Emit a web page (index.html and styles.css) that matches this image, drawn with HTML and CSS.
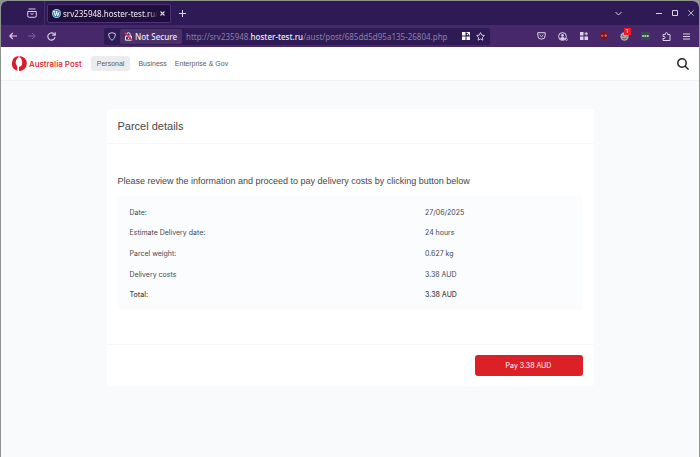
FILE: index.html
```html
<!DOCTYPE html>
<html lang="en">
  <head>
    <meta charset="UTF-8" />
    <meta name="viewport" content="width=device-width, initial-scale=1.0" />
    <title>Browser window - parcel details</title>
    <link rel="stylesheet" href="styles.css">
  </head>
  <body>
    <div class="window">
      <!-- Tab strip -->
      <div class="tab-bar">
        <button type="button" class="icon-btn tab-view" aria-label="Recent browsing">
          <svg width="10" height="10" viewBox="0 0 10 10" fill="none" stroke="currentColor">
            <path d="M1.5 1h7M.7 3.5h8.6v4.3q0 1.5-1.5 1.5H2.2q-1.5 0-1.5-1.5zM3.5 5.5q1.5 1.5 3 0" />
          </svg>
        </button>
        <div class="tab">
          <svg class="favicon" width="9" height="9" viewBox="0 0 10 10">
            <circle cx="5" cy="5" r="5" fill="#a9d5e8" />
            <circle cx="5" cy="5" r="4.2" fill="#3585ab" />
            <path d="M1.3 2.8h2M4.2 2.8H6M2.2 3l1.5 4.7L5.1 4M4.8 3l1.6 4.7L8 3.2" fill="none" stroke="#fff" stroke-width="1" />
          </svg>
          <span class="tab-title">srv235948.hoster-test.ru/</span>
          <button type="button" class="icon-btn tab-close" aria-label="Close tab">
            <svg width="5" height="5" viewBox="0 0 5 5" stroke="currentColor" stroke-width="1.1"><path d="M.5.5l4 4M4.5.5l-4 4" /></svg>
          </button>
        </div>
        <button type="button" class="icon-btn new-tab" aria-label="New tab">
          <svg width="7" height="7" viewBox="0 0 7 7" stroke="currentColor"><path d="M3.5 0v7M0 3.5h7" /></svg>
        </button>
        <div class="window-controls">
          <button type="button" class="icon-btn list-tabs" aria-label="List all tabs">
            <svg width="7" height="5" viewBox="0 0 7 5" fill="none" stroke="currentColor"><path d="M.5 1l3 3 3-3" /></svg>
          </button>
          <button type="button" class="icon-btn" aria-label="Minimize">
            <svg width="6" height="6" viewBox="0 0 6 6" stroke="currentColor"><path d="M0 3.5h6" /></svg>
          </button>
          <button type="button" class="icon-btn" aria-label="Maximize">
            <svg width="6" height="6" viewBox="0 0 6 6" fill="none" stroke="currentColor"><path d="M.5.5h5v5h-5z" /></svg>
          </button>
          <button type="button" class="icon-btn" aria-label="Close window">
            <svg width="6" height="6" viewBox="0 0 6 6" stroke="currentColor" stroke-width=".8"><path d="M.3.3l5.4 5.4M5.7.3L.3 5.7" /></svg>
          </button>
        </div>
      </div>

      <!-- Toolbar -->
      <div class="toolbar">
        <div class="nav-buttons">
          <button type="button" class="icon-btn" aria-label="Back">
            <svg width="8" height="8" viewBox="0 0 8 8" fill="none" stroke="currentColor" stroke-width="1.1"><path d="M8 4H.8M3.8 1l-3 3 3 3" /></svg>
          </button>
          <button type="button" class="icon-btn faded" aria-label="Forward">
            <svg width="8" height="8" viewBox="0 0 8 8" fill="none" stroke="currentColor"><path d="M0 4h7.2M4.2 1l3 3-3 3" /></svg>
          </button>
          <button type="button" class="icon-btn" aria-label="Reload">
            <svg width="9" height="9" viewBox="0 0 9 9" fill="none" stroke="currentColor" stroke-width="1.1"><path d="M8 5a3.6 3.6 0 1 1-1.2-3.2L8 3M8.2.3V3.3H5.2" /></svg>
          </button>
        </div>
        <div class="address-bar">
          <svg class="shield" width="8" height="9" viewBox="0 0 8 9" fill="none" stroke="currentColor"><path d="M4 .6l3.4 1.2q.2 4.7-3.4 6.6Q.4 6.5.6 1.8z" /></svg>
          <div class="security">
            <svg width="9" height="9" viewBox="0 0 9 9" fill="none" stroke="currentColor">
              <path d="M1.5 4.2h6v4h-6zM2.8 4V2.5q0-1.8 1.7-1.8t1.7 1.8V4M4.5 5.5v1.5" />
              <path d="M.5.5l8 8" stroke="#e2255c" stroke-width="1.2" />
            </svg>
            <span>Not Secure</span>
          </div>
          <div class="url">http://srv235948.<b>hoster-test.ru</b>/aust/post/685dd5d95a135-26804.php</div>
          <button type="button" class="icon-btn bright" aria-label="Page actions">
            <svg width="8" height="8" viewBox="0 0 8 8" fill="currentColor"><path d="M0 0h3.5v3.5H0zM0 4.5h3.5V8H0zM4.5 4.5H8V8H4.5zM4.5 0H8v3.5H7V1.7L5.2 3.5l-.7-.7L6.3 1H4.5z" /></svg>
          </button>
          <button type="button" class="icon-btn" aria-label="Bookmark this page">
            <svg width="9" height="9" viewBox="0 0 9 9" fill="none" stroke="currentColor" stroke-width=".9" stroke-linejoin="round"><path d="M4.5.6l1.2 2.5 2.7.4-2 1.9.5 2.8-2.4-1.3-2.4 1.3.5-2.8-2-1.9 2.7-.4z" /></svg>
          </button>
        </div>
        <div class="extensions">
          <button type="button" class="icon-btn" aria-label="Save to Pocket">
            <svg width="9" height="8" viewBox="0 0 9 8" fill="none" stroke="currentColor"><path d="M.8.7h7.4V3.5a3.7 3.7 0 0 1-7.4 0zM2.6 2.9l1.9 1.8 1.9-1.8" /></svg>
          </button>
          <button type="button" class="icon-btn" aria-label="Account">
            <svg width="10" height="9" viewBox="0 0 10 9" fill="none" stroke="currentColor">
              <circle cx="4.5" cy="4.5" r="3.9" />
              <circle cx="4.5" cy="3.4" r="1.3" fill="currentColor" stroke="none" />
              <path d="M2 7q.4-2 2.5-2T7 7q-2.5 2-5 0z" fill="currentColor" stroke="none" />
              <circle cx="8.5" cy="7.5" r="1" stroke-width=".7" />
            </svg>
          </button>
          <button type="button" class="icon-btn" aria-label="Containers">
            <svg width="8" height="8" viewBox="0 0 8 8" fill="currentColor"><path d="M0 0h3.5v3.5H0zM0 4.5h3.5V8H0zM4.5 4.5H8V8H4.5zM5.7 0h1v1.3H8v1H6.7v1.2h-1V2.3H4.5v-1h1.2z" /></svg>
          </button>
          <button type="button" class="icon-btn" aria-label="Ad blocker">
            <svg width="8" height="8" viewBox="0 0 8 8"><path d="M4 0l4 1q.4 5-4 7Q-.4 6 0 1z" fill="#870f19" /><path d="M1.6 2.8v1q0 .7.6.7t.6-.7v-1M5 2.9h1.3v1.3H5z" fill="none" stroke="#e8b4b8" stroke-width=".6" /></svg>
          </button>
          <button type="button" class="icon-btn badged" aria-label="Privacy extension, 1 item">
            <svg width="9" height="9" viewBox="0 0 9 9"><circle cx="4.5" cy="4.5" r="4.2" fill="#a9aba4" /><path d="M2 3.5l1.5 1M6.5 4.5l1-.5M2.5 6.5q2 1 4-.5" fill="none" stroke="#56595a" /></svg>
            <span class="badge">1</span>
          </button>
          <button type="button" class="icon-btn" aria-label="Password manager">
            <svg width="9" height="8" viewBox="0 0 9 8"><path d="M0 0h9v8H0z" fill="#37474b" /><path d="M1.2 4h1.6M3.5 4h1.6M5.8 4h1.9" stroke="#eef" stroke-width="1.3" /></svg>
          </button>
          <button type="button" class="icon-btn" aria-label="Extensions">
            <svg width="9" height="9" viewBox="0 0 9 9" fill="none" stroke="currentColor"><path d="M1 8.5V6.5h1q1-.1 1-1T2 4.5H1V2.6h2.3V1.8q.1-1.2 1.2-1.2t1.2 1.2v.8H8v5.9z" stroke-linejoin="round" /></svg>
          </button>
          <button type="button" class="icon-btn" aria-label="Open menu">
            <svg width="7" height="7" viewBox="0 0 7 7" stroke="currentColor"><path d="M0 1h7M0 3.5h7M0 6h7" /></svg>
          </button>
        </div>
      </div>

      <!-- Page -->
      <header class="site-header">
        <a href="#" class="brand">
          <svg width="15" height="15" viewBox="0 0 30 30">
            <path d="M13 .1A15 15 0 0 0 10.500 29.300V20C6 16 6 8 13 2.500z" fill="#dc1928" />
            <path d="M15 0a15 15 0 0 1-1 30v-8.500c4 0 6.500-3 6.500-8S18.500 3.500 15 2.500z" fill="#dc1928" />
          </svg>
          <span>Australia Post</span>
        </a>
        <nav class="site-nav">
          <a href="#" class="active">Personal</a>
          <a href="#">Business</a>
          <a href="#">Enterprise &amp; Gov</a>
        </nav>
        <button type="button" class="icon-btn search" aria-label="Search">
          <svg width="12" height="12" viewBox="0 0 12 12" fill="none" stroke="currentColor" stroke-width="1.5"><circle cx="5" cy="5" r="4.2" /><path d="M8 8l3.6 3.6" /></svg>
        </button>
      </header>

      <main class="page">
        <section class="card">
          <h1>Parcel details</h1>
          <div class="card-body">
            <p>Please review the information and proceed to pay delivery costs by clicking button below</p>
            <div class="details">
              <table>
                <tr><th scope="row">Date:</th><td>27/06/2025</td></tr>
                <tr><th scope="row">Estimate Delivery date:</th><td>24 hours</td></tr>
                <tr><th scope="row">Parcel weight:</th><td>0.627 kg</td></tr>
                <tr><th scope="row">Delivery costs</th><td>3.38 AUD</td></tr>
                <tr class="total"><th scope="row">Total:</th><td>3.38 AUD</td></tr>
              </table>
            </div>
          </div>
          <div class="card-footer">
            <button type="button" class="pay-button">Pay 3.38 AUD</button>
          </div>
        </section>
      </main>
    </div>
  </body>
</html>
```
FILE: styles.css
```css
* {
  box-sizing: border-box;
}
body {
  margin: 0;
  background: #8d938f;
  font-family: Inter, Arial, sans-serif;
  font-size: 7px;
  color: #46464b;
}
button {
  font-family: inherit;
  border: none;
  cursor: pointer;
}
svg {
  display: block;
  flex: none;
}
.window {
  display: flex;
  flex-direction: column;
  min-height: 100vh;
  border: 1px solid #8d938f;
  border-bottom: none;
  border-radius: 7px 7px 0 0;
  overflow: hidden;
  background: #f9fafc;
}
.icon-btn {
  display: flex;
  align-items: center;
  justify-content: center;
  padding: 0;
  background: none;
  color: #dcd3e8;
}

/* Tab strip */
.tab-bar {
  display: flex;
  align-items: center;
  height: 24px;
  background: #2e1b55;
  font-family: "Noto Sans", sans-serif;
  font-size: 8px;
}
.tab-view {
  width: 44px;
  height: 24px;
  padding-left: 19px;
  border-right: 1px solid #45306c;
}
.tab {
  display: flex;
  align-items: center;
  gap: 2px;
  height: 19px;
  margin-left: 2px;
  padding: 0 5px 0 4px;
  border: 1px solid #50307a;
  border-radius: 2px;
  background: #200f3c;
  color: #f2edf8;
}
.tab-title {
  white-space: nowrap;
  mask-image: linear-gradient(to right, #000 90%, transparent);
}
.new-tab {
  margin-left: 8px;
}
.window-controls {
  display: flex;
  align-items: center;
  gap: 10px;
  margin-left: auto;
  padding-right: 5px;
}
.list-tabs {
  margin-right: 24px;
}

/* Toolbar */
.toolbar {
  display: flex;
  align-items: center;
  height: 22px;
  background: #47286b;
  font-family: "Noto Sans", sans-serif;
  font-size: 8px;
}
.nav-buttons {
  display: flex;
  gap: 11px;
  width: 103px;
  padding-left: 8px;
}
.faded {
  color: #80679c;
}
.address-bar {
  display: flex;
  align-items: center;
  flex: 1;
  gap: 4px;
  height: 17px;
  padding: 0 5px 0 4px;
  border-radius: 2px;
  background: #2e1b55;
  color: #cbbfdc;
}
.security {
  display: flex;
  align-items: center;
  gap: 2px;
  height: 15px;
  padding: 0 5px 0 4px;
  border-radius: 2px;
  background: #4a3269;
  color: #eee8f5;
  font-weight: 500;
  white-space: nowrap;
}
.url {
  flex: 1;
  overflow: hidden;
  white-space: nowrap;
  color: #8f7eaa;
}
.url b {
  font-weight: 500;
  color: #f2edf8;
}
.bright {
  margin-right: 2px;
  color: #fff;
}
.extensions {
  display: flex;
  align-items: center;
  justify-content: space-between;
  width: 209px;
  padding: 0 9px 0 47px;
}
.badged {
  position: relative;
}
.badge {
  position: absolute;
  top: -4px;
  right: -2px;
  padding: 0 2px;
  background: #ee1c24;
  color: #fff;
  font-size: 6px;
  line-height: 7px;
}

/* Site header */
.site-header {
  display: flex;
  align-items: center;
  height: 34px;
  padding: 0 10px 0 11px;
  border-bottom: 1px solid #f0f1f3;
  background: #fff;
}
.brand {
  display: flex;
  align-items: center;
  gap: 2px;
  color: #dc1928;
  font-size: 8px;
  font-weight: 500;
  text-decoration: none;
}
.site-nav {
  display: flex;
  align-items: center;
  gap: 8px;
  margin-left: 9px;
  font-family: "Liberation Sans", Arial, sans-serif;
}
.site-nav a {
  color: #5c5c60;
  line-height: 15px;
  text-decoration: none;
}
.site-nav .active {
  padding: 0 6px;
  border-radius: 3px;
  background: #ebeced;
}
.search {
  margin-left: auto;
  color: #222226;
}

/* Parcel card */
.page {
  flex: 1;
  padding: 28px 15px;
}
.card {
  max-width: 487px;
  margin: 0 auto;
  border-radius: 3px;
  background: #fff;
}
.card h1 {
  margin: 0;
  padding: 0 11px;
  border-bottom: 1px solid #f7f8fa;
  font-family: "Liberation Sans", Arial, sans-serif;
  font-size: 11px;
  font-weight: 400;
  line-height: 34px;
}
.card-body {
  padding: 30px 11px 34px;
}
.card-body p {
  margin: 0 0 8px;
  font-family: "Liberation Sans", Arial, sans-serif;
  font-size: 9px;
  line-height: 14px;
}
.details {
  padding: 6px 12px 5px;
  border-radius: 3px;
  background: #fbfcfe;
}
.details table {
  width: 100%;
  height: 103px;
  border-collapse: collapse;
}
.details th,
.details td {
  padding: 0;
  font-weight: 400;
  text-align: left;
}
.details th {
  width: 67%;
}
.details .total th,
.details .total td {
  font-weight: 500;
}
.card-footer {
  display: flex;
  justify-content: flex-end;
  padding: 10px 11px;
  border-top: 1px solid #f7f8fa;
}
.pay-button {
  width: 108px;
  border-radius: 3px;
  padding: 0;
  background: #db2127;
  color: #fff;
  font-size: 7px;
  line-height: 21px;
}
```
